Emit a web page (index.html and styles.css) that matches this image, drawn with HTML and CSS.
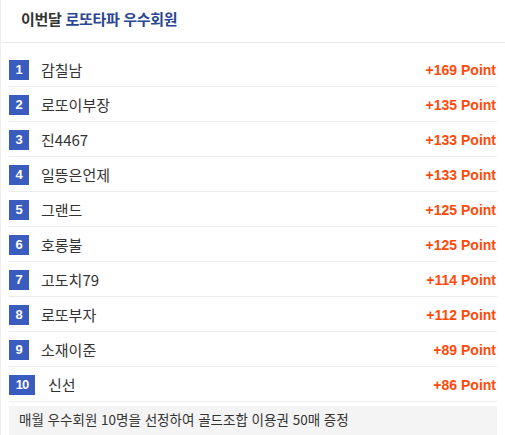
FILE: index.html
```html
<!DOCTYPE html>
<html lang="ko">
<head>
<meta charset="utf-8">
<link rel="stylesheet" href="styles.css">
</head>
<body>
<div class="box">
  <div class="head"><span class="dark">이번달</span> <span class="blue">로또타파 우수회원</span></div>
  <ul class="list">
    <li class="row"><span class="badge">1</span><span class="name">감칠남</span><span class="pt">+169 Point</span></li>
    <li class="row"><span class="badge">2</span><span class="name">로또이부장</span><span class="pt">+135 Point</span></li>
    <li class="row"><span class="badge">3</span><span class="name">진4467</span><span class="pt">+133 Point</span></li>
    <li class="row"><span class="badge">4</span><span class="name">일뜽은언제</span><span class="pt">+133 Point</span></li>
    <li class="row"><span class="badge">5</span><span class="name">그랜드</span><span class="pt">+125 Point</span></li>
    <li class="row"><span class="badge">6</span><span class="name">호롱불</span><span class="pt">+125 Point</span></li>
    <li class="row"><span class="badge">7</span><span class="name">고도치79</span><span class="pt">+114 Point</span></li>
    <li class="row"><span class="badge">8</span><span class="name">로또부자</span><span class="pt">+112 Point</span></li>
    <li class="row"><span class="badge">9</span><span class="name">소재이준</span><span class="pt">+89 Point</span></li>
    <li class="row"><span class="badge wide">10</span><span class="name">신선</span><span class="pt">+86 Point</span></li>
  </ul>
  <div class="foot">매월 우수회원 10명을 선정하여 골드조합 이용권 50매 증정</div>
</div>
</body>
</html>
```
FILE: styles.css
```css
html, body {
  margin: 0;
  padding: 0;
  background: #fff;
}
body {
  font-family: "Noto Sans CJK KR", "Liberation Sans", sans-serif;
  color: #333;
}
.box {
  width: 505px;
  height: 435px;
  overflow: hidden;
  border-left: 1px solid #eee;
  box-sizing: border-box;
}
.head {
  height: 42px;
  border-bottom: 1px solid #e8e8e8;
  padding-left: 20px;
  font-size: 15px;
  font-weight: 700;
  line-height: 38px;
  letter-spacing: -0.3px;
}
.dark { color: #333; }
.blue { color: #2a4592; }
.list {
  list-style: none;
  margin: 9px 8px 0 8px;
  padding: 0;
}
.row {
  display: flex;
  align-items: center;
  border-bottom: 1px solid #ececec;
  padding-top: 1px;
  padding-right: 1px;
  height: 33px;
}
.badge {
  min-width: 20px;
  height: 20px;
  box-sizing: border-box;
  background: #3b5cbf;
  color: #fff;
  font-family: "Liberation Sans", sans-serif;
  font-weight: 700;
  font-size: 13px;
  line-height: 20px;
  text-align: center;
}
.badge.wide {
  width: 26px;
  letter-spacing: -1px;
}
.name {
  margin-left: 12px;
  font-size: 15px;
  color: #333;
  flex: 1;
  line-height: 20px;
}
.wide + .name {
  margin-left: 13px;
}
.pt {
  font-family: "Liberation Sans", sans-serif;
  font-weight: 700;
  font-size: 14px;
  color: #ff4a0a;
}
.foot {
  margin: 4px 8px 0 8px;
  background: #f4f4f4;
  height: 30px;
  line-height: 26px;
  padding-left: 10px;
  font-size: 13.5px;
  color: #333;
}
```
